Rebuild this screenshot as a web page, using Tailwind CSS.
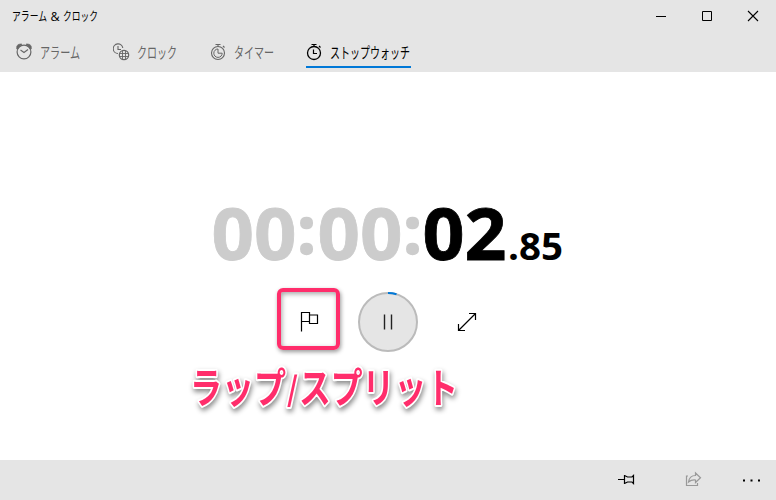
<!DOCTYPE html>
<html lang="ja">
<head>
<meta charset="utf-8">
<title>アラーム & クロック</title>
<script src="https://cdn.jsdelivr.net/npm/@tailwindcss/browser@4"></script>
</head>
<body class="w-[776px] h-[500px] overflow-hidden bg-white text-black font-['Noto_Sans_CJK_JP',sans-serif]">
<div class="flex flex-col w-[776px] h-[500px]">
  <header class="h-[72px] bg-[#e5e5e5] flex flex-col shrink-0">
    <div class="h-8 flex justify-between">
      <svg class="w-[160px] h-8" viewBox="0 0 160 32" font-size="12"><text x="12" y="21" textLength="35" lengthAdjust="spacingAndGlyphs">アラーム</text><text x="50.500" y="21" font-family="Open Sans" font-size="12.500">&amp;</text><text x="63" y="21" textLength="35" lengthAdjust="spacingAndGlyphs">クロック</text></svg>
      <div class="flex">
        <svg class="w-[46px] h-8" viewBox="0 0 46 32"><path d="M18 16.500h10" stroke="#000"/></svg>
        <svg class="w-[46px] h-8" viewBox="0 0 46 32"><path d="M18.500 11.500h9v9h-9z" fill="none" stroke="#000"/></svg>
        <svg class="w-[46px] h-8" viewBox="0 0 46 32"><path d="M18 11l10 10M28 11l-10 10" stroke="#000" stroke-width="1.1"/></svg>
      </div>
    </div>
    <nav class="h-10 flex pl-4 text-[#666]">
      <div class="flex w-[97px]">
        <svg class="w-[24px] h-10 shrink-0" viewBox="0 0 24 40" fill="none" stroke="currentColor"><circle cx="8" cy="20" r="6.9" stroke-width="1.2"/><path d="M.7 17V14.500Q1.500 12 4 12H6L1.500 17ZM15.300 17V14.500Q14.500 12 12 12H10L14.500 17Z" fill="currentColor" stroke-width=".6"/><path d="M4.500 18l3.500 2.500 4-3" stroke-width="1.1"/></svg>
        <svg class="w-[72px] h-10 shrink-0" viewBox="0 0 72 40" fill="currentColor"><text x="0" y="26" font-size="15" textLength="40" lengthAdjust="spacingAndGlyphs">アラーム</text></svg>
      </div>
      <div class="flex w-[97px]">
        <svg class="w-[24px] h-10 shrink-0" viewBox="0 0 24 40" fill="none" stroke="currentColor"><path d="M5 21.500A4.800 4.800 0 1 1 9.800 16M5 14v3.500h3" stroke-width="1.100"/><circle cx="11" cy="23" r="4.700" stroke-width="1.2"/><path d="M6.500 21.500h9M6.500 24.500h9M9.500 18.500v9M12.500 18.500v9" stroke-width=".9"/></svg>
        <svg class="w-[72px] h-10 shrink-0" viewBox="0 0 72 40" fill="currentColor"><text x="0" y="26" font-size="15" textLength="40" lengthAdjust="spacingAndGlyphs">クロック</text></svg>
      </div>
      <div class="flex w-[96px]">
        <svg class="w-[24px] h-10 shrink-0" viewBox="0 0 24 40" fill="none" stroke="currentColor"><circle cx="8" cy="21" r="6.500" stroke-width="1.100"/><path d="M5.500 12.500h5M8 12.500v2M13 14l1.500 1.500" stroke-width="1.100"/><path d="M8 17a4.200 4.200 0 1 0 4.200 4.200H8Z"/></svg>
        <svg class="w-[72px] h-10 shrink-0" viewBox="0 0 72 40" fill="currentColor"><text x="0" y="26" font-size="15" textLength="40" lengthAdjust="spacingAndGlyphs">タイマー</text></svg>
      </div>
      <div class="flex w-[105px] h-9 border-b-2 border-[#0078d7] text-black">
        <svg class="w-[24px] h-[34px] shrink-0" viewBox="0 0 24 34" fill="none" stroke="currentColor"><circle cx="8" cy="21" r="6.500" stroke-width="1.300"/><path d="M5.500 12.500h5M8 12.500v2M13 14l1.500 1.500M7.500 17.500v4H11" stroke-width="1.200"/></svg>
        <svg class="w-[140px] h-[34px] shrink-0" viewBox="0 0 140 34" fill="currentColor"><text x="0" y="26" font-size="15" textLength="80" lengthAdjust="spacingAndGlyphs">ストップウォッチ</text></svg>
      </div>
    </nav>
  </header>

  <main class="flex-1 flex flex-col">
    <svg class="w-[776px] h-[216px] shrink-0 font-['Open_Sans',sans-serif] font-bold" viewBox="0 72 776 216">
      <g font-size="72" fill="#ccc" stroke="#ccc" stroke-width=".8">
        <text x="211.500" y="260" textLength="85" lengthAdjust="spacingAndGlyphs">00</text>
        <text x="297" y="253.500" font-size="67" stroke-width="1.600">:</text>
        <text x="317.500" y="260" textLength="85" lengthAdjust="spacingAndGlyphs">00</text>
        <text x="403" y="253.500" font-size="67" stroke-width="1.600">:</text>
      </g>
      <text x="422.500" y="260" font-size="72" stroke="#000" stroke-width=".8" textLength="84" lengthAdjust="spacingAndGlyphs">02</text>
      <text x="508" y="260" font-size="38" textLength="55" lengthAdjust="spacingAndGlyphs">.85</text>
    </svg>
    <div class="h-[66px] flex pl-[277px] items-start">
      <div class="w-[63px] h-[62px] rounded-md border-4 border-[#ff2d6b] shadow-[1px_2px_4px_rgba(0,0,0,.4),inset_1px_2px_5px_rgba(0,0,0,.35)] flex items-center justify-center">
        <svg class="w-5 h-6 mt-[6px]" viewBox="0 0 20 24" fill="none" stroke="#000" stroke-width="1.200"><path d="M2.500 21.500V2.500h8v9h-8M10.500 5h8v8.500h-8v-3"/></svg>
      </div>
      <svg class="w-[62px] h-[62px] ml-[17px] mt-[3px]" viewBox="0 0 62 62" fill="none"><circle cx="31" cy="31" r="29" fill="#e5e5e5" stroke="#bbb" stroke-width="2"/><path d="M31 2q4.500 0 8.500 1.200" stroke="#0078d7" stroke-width="2"/><path d="M27.500 23.500v15M34.500 23.500v15" stroke="#222" stroke-width="1.400"/></svg>
      <svg class="w-5 h-5 ml-[38px] mt-6" viewBox="0 0 20 20" fill="none" stroke="#000" stroke-width="1.200"><path d="M1.500 18.500l17-17M12 1.500h6.500V8M1.500 12v6.500H8"/></svg>
    </div>
    <svg class="w-[776px] h-[70px] shrink-0" viewBox="0 354 776 70">
      <g font-size="41" font-weight="700" fill="#ff2d6b" stroke="#fff" stroke-width="4" stroke-linejoin="round" paint-order="stroke" style="filter:drop-shadow(1px 3px 2.5px rgba(0,0,0,.45))">
        <text x="190" y="403" textLength="96" lengthAdjust="spacingAndGlyphs">ラップ</text>
        <text x="287" y="401" font-size="33" textLength="11" lengthAdjust="spacingAndGlyphs">/</text>
        <text x="299" y="403" textLength="159" lengthAdjust="spacingAndGlyphs">スプリット</text>
      </g>
    </svg>
  </main>

  <footer class="h-10 bg-[#e5e5e5] flex shrink-0 justify-end">
    <svg class="w-[68px] h-10" viewBox="0 0 68 40" fill="none" stroke="#000" stroke-width="1.200"><path d="M10 19.500h6M16.500 15v9M16.500 15.500l3 1.500h4.500l1.500-1.500v8l-1.500-1.500h-4.500l-3 1.500"/></svg>
    <svg class="w-[66px] h-10" viewBox="0 0 66 40" fill="none" stroke="#999" stroke-width="1.200"><path d="M12 16h-1.500v9.500h11V23M12.500 22q1-6.500 7-6.500v-2.500l5 4.700-5 4.800V20q-4-.5-7 2z"/></svg>
    <svg class="w-[34px] h-10" viewBox="0 0 34 40"><path d="M1 19.500h2v2H1zM8.500 19.500h2v2h-2zM16 19.500h2v2h-2z"/></svg>
  </footer>
</div>
</body>
</html>
